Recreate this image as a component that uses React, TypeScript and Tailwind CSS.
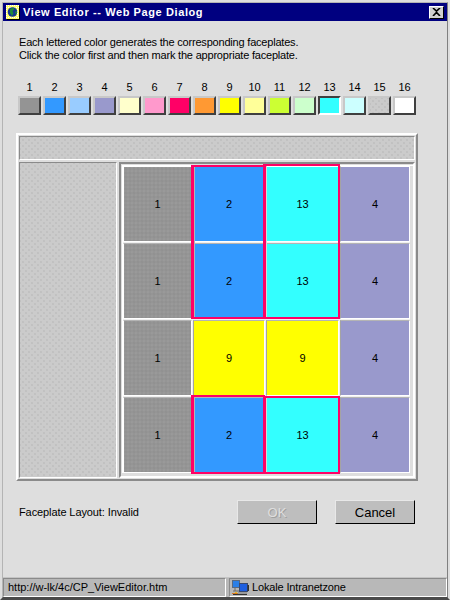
import React from "react";

const swatches = [
  "bg-[#949494]", "bg-[#3399ff]", "bg-[#99ccff]", "bg-[#9999cc]",
  "bg-[#ffffcc]", "bg-[#ff99cc]", "bg-[#ff0066]", "bg-[#ff9933]",
  "bg-[#ffff00]", "bg-[#ffff99]", "bg-[#ccff33]", "bg-[#ccffcc]",
  "bg-[#33ffff]", "bg-[#ccffff]", "bg-[#cbcbcb]", "bg-[#ffffff]",
];

const dots =
  "bg-[radial-gradient(#c1c1c1_0.7px,transparent_0.8px),radial-gradient(#c1c1c1_0.7px,transparent_0.8px)] bg-[length:6px_6px] bg-[position:0_0,3px_3px]";
const grayDots =
  "bg-[radial-gradient(#919191_0.7px,transparent_0.8px),radial-gradient(#999999_0.7px,transparent_0.8px)] bg-[length:4px_4px] bg-[position:0_0,2px_2px]";

const rows = [
  ["1", "2", "13", "4"],
  ["1", "2", "13", "4"],
  ["1", "9", "9", "4"],
  ["1", "2", "13", "4"],
];

const cellColor: Record<string, string> = {
  "1": "bg-[#959595]",
  "2": "bg-[#3399ff]",
  "13": "bg-[#33ffff]",
  "4": "bg-[#9999cc]",
  "9": "bg-[#ffff00]",
};

function PageIcon() {
  return (
    <svg width="14" height="15" viewBox="0 0 14 15" className="shrink-0">
      <rect x="0" y="0" width="13" height="14" fill="#ffff66" />
      <path d="M0 0.5h13M0 2.5h13M0 4.5h2M11 4.5h2M0 6.5h2M11 6.5h2M0 8.5h2M11 8.5h2M0 10.5h2M11 10.5h2M0 12.5h13" stroke="#fff" strokeDasharray="1 1" />
      <path d="M13.5 1v14M1 14.5h13" stroke="#000" />
      <circle cx="6.5" cy="7" r="4.8" fill="#16388f" />
      <path d="M4 4l3-1.5 1.5 1.5-2 2 1 2.5-1.5 2.5-2-3z" fill="#1f8a3a" />
      <path d="M9 7l2-1v2l-1 1.5z" fill="#1f8a3a" />
    </svg>
  );
}

function ZoneIcon() {
  return (
    <svg width="17" height="15" viewBox="0 0 17 15" className="shrink-0">
      <rect x="0.5" y="0.5" width="7" height="7" fill="#2b7fe6" stroke="#5a6a80" />
      <path d="M3 8v3M1 11h6" stroke="#6a6a6a" />
      <rect x="7.5" y="3.5" width="8" height="8" fill="#1f5fe0" stroke="#3a4a70" />
      <rect x="15.5" y="5" width="1.5" height="6" fill="#333" />
      <rect x="3" y="12" width="2" height="2" fill="#e8c020" />
      <rect x="0" y="13" width="6" height="1" fill="#d87a20" />
      <rect x="6" y="12" width="9" height="2" fill="#9a9a9a" />
      <rect x="1" y="14" width="14" height="1" fill="#333" />
    </svg>
  );
}

export default function App() {
  return (
    <div className="w-[450px] h-[600px] border-2 border-[#dedede] border-b-[#4a4a4a] bg-[#dedede] text-black text-[11px] leading-[13px] font-['Liberation_Sans',Arial,sans-serif] overflow-hidden">
      <div className="h-full flex flex-col border border-[#b4b4b4] border-r-[#808080] border-b-[#4a4a4a]">
        <div className="h-[18px] bg-[#000080] flex items-center pl-[3px] pr-[3px] shrink-0">
          <PageIcon />
          <span className="ml-[3px] text-white font-bold text-[11px] tracking-[0.6px] whitespace-nowrap">View Editor -- Web Page Dialog</span>
          <div className="ml-auto w-[15px] h-[13px] bg-[#d0d0d0] border border-t-white border-l-white border-r-black border-b-black flex items-center justify-center">
            <svg width="9" height="8" viewBox="0 0 9 8">
              <path d="M1 0l3.5 3.2L8 0M1 8l3.5-3.6L8 8" stroke="#000" strokeWidth="1.6" fill="none" />
            </svg>
          </div>
        </div>

        <div className="flex-1 flex flex-col pl-[13px]">
          <p className="mt-[15px] ml-[3px] whitespace-nowrap tracking-[-0.2px]">
            Each lettered color generates the corresponding faceplates.
            <br />
            Click the color first and then mark the appropriate faceplate.
          </p>

          <div className="mt-[19px] ml-[2px] flex gap-[2px]">
            {swatches.map((c, i) => (
              <div key={i} className="w-[23px] flex flex-col items-center">
                <span className="h-[13px] mb-[2px]">{i + 1}</span>
                <div
                  className={`w-[23px] h-[19px] border-2 ${
                    i === 12
                      ? "border-t-[#404040] border-l-[#404040] border-r-white border-b-white"
                      : "border-t-[#c8c8c8] border-l-[#c8c8c8] border-r-[#404040] border-b-[#404040]"
                  } ${c} ${i === 14 ? dots : ""}`}
                />
              </div>
            ))}
          </div>

          <div className="mt-[18px] w-[402px] h-[348px] flex flex-col gap-[2px] p-[1px] border-2 border-t-white border-l-white border-r-[#8a8a8a] border-b-[#8a8a8a]">
            <div className={`h-[24px] bg-[#cbcbcb] border border-t-[#8a8a8a] border-l-[#8a8a8a] border-r-white border-b-white ${dots}`} />
            <div className="flex-1 flex gap-[2px] min-h-0">
              <div className={`w-[98px] bg-[#cbcbcb] border border-t-[#8a8a8a] border-l-[#8a8a8a] border-r-white border-b-white ${dots}`} />
              <div className="flex-1 border-2 border-t-[#8a8a8a] border-l-[#8a8a8a] border-r-white border-b-white pt-[1px] pl-[1px]">
                <div className="border-t border-l border-white">
                  <div className="grid grid-cols-[69px_72px_73px_70px] grid-rows-[76px_76px_76px_76px] gap-[1px] w-fit bg-[#f0f0f0]">
                    {rows.map((r, ri) =>
                      r.map((v, ci) => (
                        <div
                          key={`${ri}-${ci}`}
                          style={{ gridColumnStart: ci + 1, gridRowStart: ri + 1 }}
                          className={`flex items-center justify-center border border-r-white border-b-white ${
                            ri === 0 ? "border-t-white" : "border-t-[#b4b4b4]"
                          } ${ci === 0 ? "border-l-white" : "border-l-[#a4a4a4]"} ${cellColor[v]} ${v === "1" ? grayDots : ""}`}
                        >
                          {v}
                        </div>
                      ))
                    )}
                    <div className="col-start-2 row-start-1 row-span-2 z-10 border-2 border-l-[3px] border-[#ff0066] -ml-[2px] -mt-[1px] shadow-[inset_1px_0_0_#b4b4b4]" />
                    <div className="col-start-2 row-start-4 z-10 border-2 border-l-[3px] border-[#ff0066] -ml-[2px] -mt-[2px] -mb-[1px] shadow-[inset_1px_0_0_#b4b4b4]" />
                    <div className="col-start-3 row-start-1 row-span-2 z-20 border-2 border-l-[3px] border-[#ff0066] -ml-[3px] -mr-[1px] -mt-[2px] shadow-[inset_1px_0_0_#d8d8d8]" />
                    <div className="col-start-3 row-start-4 z-20 border-2 border-l-[3px] border-[#ff0066] -ml-[3px] -mr-[1px] -mt-[1px] -mb-[1px] shadow-[inset_1px_0_0_#d8d8d8]" />
                  </div>
                </div>
              </div>
            </div>
          </div>

          <div className="mt-[19px] flex items-center pl-[3px]">
            <span className="w-[218px] tracking-[-0.1px]">Faceplate Layout: Invalid</span>
            <div className="w-[80px] h-[24px] bg-[#bebebe] border border-t-[#e8e8e8] border-l-[#e8e8e8] border-r-black border-b-black flex items-center justify-center text-[#dedede] [text-shadow:1px_1px_0_#a0a0a0] text-[13px]">OK</div>
            <div className="ml-[18px] w-[80px] h-[24px] bg-[#bebebe] border border-t-[#e8e8e8] border-l-[#e8e8e8] border-r-black border-b-black flex items-center justify-center text-[13px]">Cancel</div>
          </div>
        </div>

        <div className="h-[20px] shrink-0 flex gap-[3px] bg-[#b8b8b8] border-t border-[#c4c4c4]">
          <div className="w-[223px] flex items-center pl-[4px] border border-t-[#8a8a8a] border-l-[#8a8a8a] border-r-white border-b-white bg-[#b8b8b8] whitespace-nowrap">http://w-lk/4c/CP_ViewEditor.htm</div>
          <div className="flex-1 flex items-center gap-[3px] pl-[2px] border border-t-[#8a8a8a] border-l-[#8a8a8a] border-r-white border-b-white bg-[#b8b8b8] whitespace-nowrap tracking-[-0.15px]">
            <ZoneIcon />
            Lokale Intranetzone
          </div>
        </div>
      </div>
    </div>
  );
}
